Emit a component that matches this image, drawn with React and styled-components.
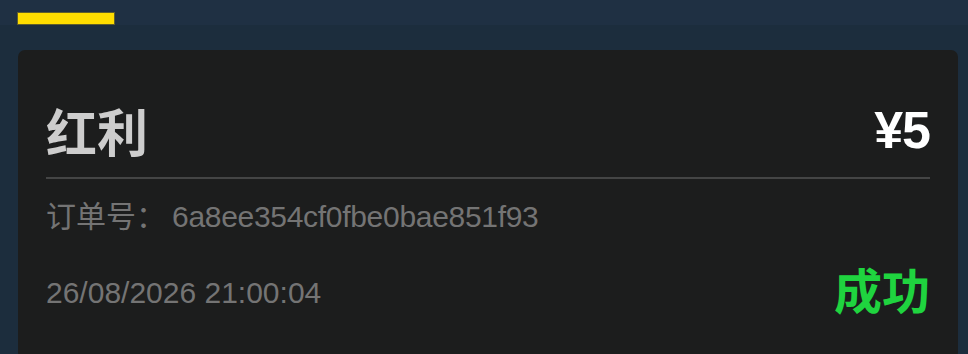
import React from 'react'
import styled, { createGlobalStyle } from 'styled-components'

const GlobalStyle = createGlobalStyle`
  html, body {
    margin: 0;
    padding: 0;
    background-color: #1c2d3d;
    font-family: "Liberation Sans", "Noto Sans CJK SC", sans-serif;
  }
`

const order = {
  type: '红利',
  amount: '¥5',
  id: '6a8ee354cf0fbe0bae851f93',
  time: '26/08/2026 21:00:04',
  status: '成功',
}

function App() {
  return (
    <StyledPage>
      <GlobalStyle />
      <StyledTabBar>
        <StyledTab />
      </StyledTabBar>

      <StyledContent>
        <StyledCard>
          <StyledHeader>
            <StyledTitle>{order.type}</StyledTitle>
            <StyledAmount>{order.amount}</StyledAmount>
          </StyledHeader>

          <StyledOrderRow>
            <span>订单号：</span>
            <StyledOrderId>{order.id}</StyledOrderId>
          </StyledOrderRow>

          <StyledFooter>
            <StyledTime>{order.time}</StyledTime>
            <StyledStatus success>{order.status}</StyledStatus>
          </StyledFooter>
        </StyledCard>
      </StyledContent>
    </StyledPage>
  )
}

const StyledPage = styled.div`
  height: 354px;
  overflow: hidden;
  background-color: #1c2d3d;
`
const StyledTabBar = styled.div`
  height: 25px;
  background-color: #1f3043;
  padding: 0 18px;
  display: flex;
  align-items: flex-end;
`
const StyledTab = styled.div`
  width: 96px;
  height: 11px;
  margin-bottom: 1px;
  background-color: #ffdd00;
  box-shadow: 0 0 0 1px rgba(140, 125, 30, 0.6);
`
const StyledContent = styled.div`
  padding: 25px 10px 0 18px;
`
const StyledCard = styled.div`
  background-color: #1c1d1d;
  border-radius: 7px;
  padding: 50px 28px 40px;
`
const StyledHeader = styled.div`
  display: flex;
  align-items: center;
  justify-content: space-between;
  height: 60px;
  padding-bottom: 17px;
  border-bottom: 2px solid #444545;
`
const StyledTitle = styled.h2`
  margin: 0;
  font-size: 51px;
  font-weight: bold;
  color: #cdcdcd;
`
const StyledAmount = styled.div`
  font-size: 52px;
  font-weight: bold;
  color: #ffffff;
  letter-spacing: -1px;
`
const StyledOrderRow = styled.div`
  display: flex;
  gap: 6px;
  margin-top: 18px;
  line-height: 40px;
  font-size: 30px;
  color: #747474;
`
const StyledOrderId = styled.span`
  font-size: 30px;
  letter-spacing: -0.3px;
`
const StyledFooter = styled.div`
  display: flex;
  align-items: center;
  justify-content: space-between;
  margin-top: 26px;
  height: 56px;
`
const StyledTime = styled.span`
  font-size: 30px;
  color: #747474;
  padding-top: 4px;
`
const StyledStatus = styled.span`
  font-size: 48px;
  font-weight: bold;
  margin-top: -6px;
  color: ${(pr) => (pr.success ? '#1fd43f' : '#e04040')};
`

export default App
